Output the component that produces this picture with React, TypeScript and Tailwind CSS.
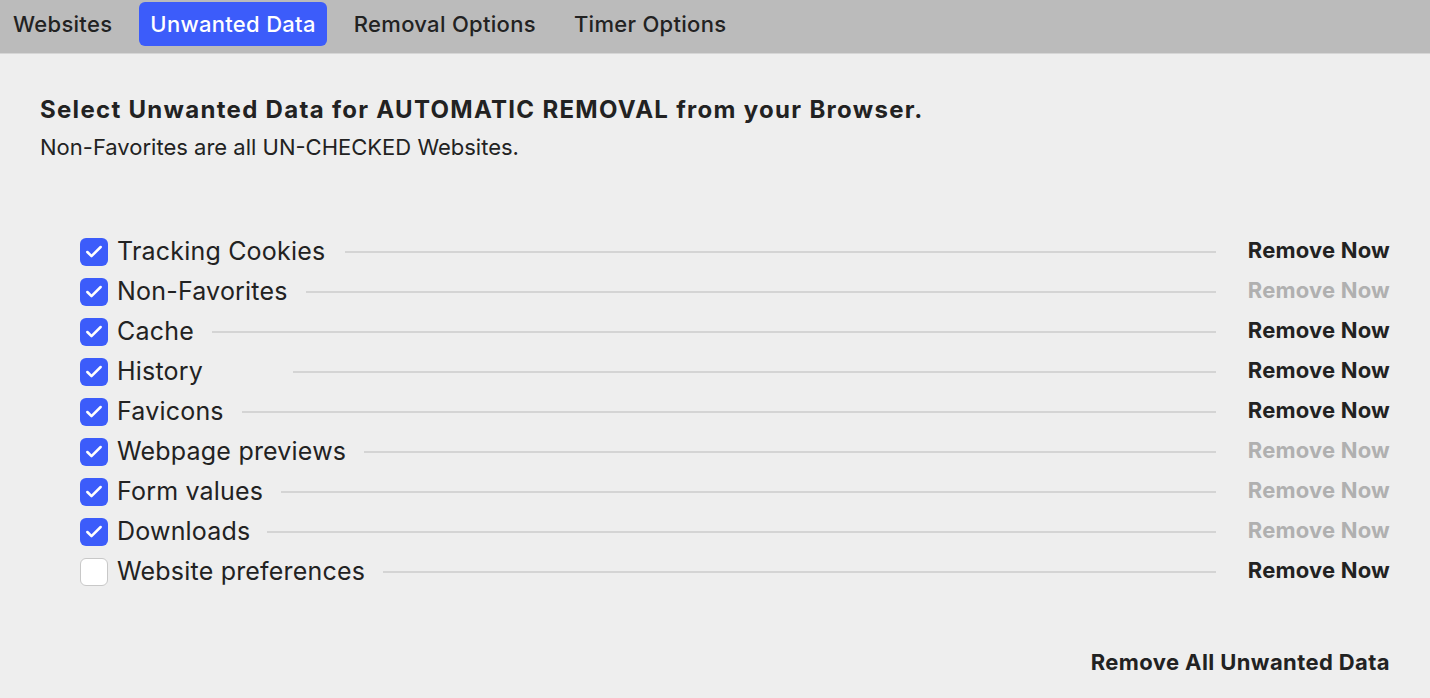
import { Check } from 'lucide-react';

const tabs = ['Websites', 'Unwanted Data', 'Removal Options', 'Timer Options'];

const items = [
  { label: 'Tracking Cookies', checked: true, enabled: true, gap: 'ml-5' },
  { label: 'Non-Favorites', checked: true, enabled: false, gap: 'ml-[18px]' },
  { label: 'Cache', checked: true, enabled: true, gap: 'ml-[18px]' },
  { label: 'History', checked: true, enabled: true, gap: 'ml-[90px]' },
  { label: 'Favicons', checked: true, enabled: true, gap: 'ml-[18px]' },
  { label: 'Webpage previews', checked: true, enabled: false, gap: 'ml-[18px]' },
  { label: 'Form values', checked: true, enabled: false, gap: 'ml-[18px]' },
  { label: 'Downloads', checked: true, enabled: false, gap: 'ml-[17px]' },
  { label: 'Website preferences', checked: false, enabled: true, gap: 'ml-[18px]' },
];

export default function App() {
  return (
    <div className="w-[1430px] h-[698px] bg-[#eeeeee] overflow-hidden font-['Inter',sans-serif] text-[#222]">
      {/* Tab bar */}
      <div className="h-[54px] bg-[#bbbbbb] border-b border-[#d6d6d6] flex items-start gap-4 pl-[2px] pt-[2px]">
        {tabs.map((tab) => (
          <div
            key={tab}
            className={
              tab === 'Unwanted Data'
                ? 'h-11 px-[11px] flex items-center rounded-md bg-[#3c5cfa] text-white text-[22px] font-medium tracking-[0.3px]'
                : 'h-11 px-[11px] flex items-center text-[22px] font-medium text-[#222] tracking-[0.3px]'
            }
          >
            {tab}
          </div>
        ))}
      </div>

      <div className="px-10">
        <h1 className="mt-[42px] text-[24px] leading-7 font-bold tracking-[1.3px] text-[#222]">
          Select Unwanted Data for AUTOMATIC REMOVAL from your Browser.
        </h1>
        <p className="mt-[11px] text-[22px] leading-6 text-[#222]">
          Non-Favorites are all UN-CHECKED Websites.
        </p>

        <div className="mt-[73px] pl-10">
          {items.map((item) => (
            <div key={item.label} className="h-10 flex items-center">
              {item.checked ? (
                <div className="w-7 h-7 rounded-[6px] bg-[#3c5cfa] flex items-center justify-center">
                  <Check className="w-5 h-5 text-white" strokeWidth={3} />
                </div>
              ) : (
                <div className="w-7 h-7 rounded-[6px] bg-white border border-[#c8c8c8]" />
              )}
              <span className="ml-[9px] text-[25px] tracking-[0.2px] text-[#222]">{item.label}</span>
              <div className={`${item.gap} flex-1 h-[2px] bg-[#d4d4d4]`} />
              <button
                className={
                  item.enabled
                    ? 'ml-8 -mt-1 text-[22px] font-bold tracking-[0.2px] text-[#222]'
                    : 'ml-8 -mt-1 text-[22px] font-bold tracking-[0.2px] text-[#b0b0b0]'
                }
              >
                Remove Now
              </button>
            </div>
          ))}
        </div>

        <div className="mt-[54px] flex justify-end">
          <button className="text-[22px] font-bold tracking-[0.4px] text-[#222]">Remove All Unwanted Data</button>
        </div>
      </div>
    </div>
  );
}
